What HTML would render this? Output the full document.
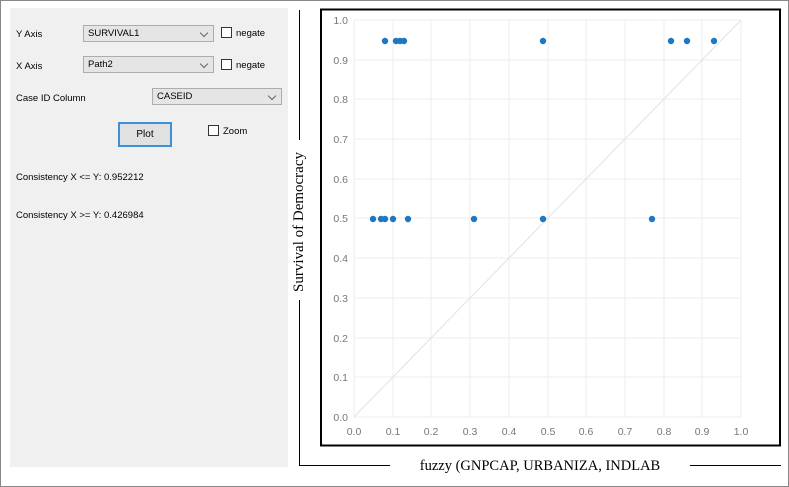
<!DOCTYPE html>
<html><head><style>
body{margin:0;width:789px;height:487px;background:#fff;position:relative;overflow:hidden;font-family:"Liberation Sans",sans-serif}
.frame{position:absolute;left:0;top:0;width:787px;height:485px;border:1px solid #888}
.panel{position:absolute;left:10px;top:8px;width:278px;height:459px;background:#f0f0f0;font-size:9.5px;color:#000}
.lbl{position:absolute}
.cb{position:absolute;width:147px;height:17px;background:#e5e5e5;border:1px solid #adadad;box-sizing:border-box;font-size:9.5px;padding:2px 0 0 4px}
.cb:after{content:"";position:absolute;right:6px;top:4px;width:5px;height:5px;border-right:1px solid #666;border-bottom:1px solid #666;transform:rotate(45deg)}
.chk{position:absolute;width:11px;height:11px;border:1px solid #333;background:#fff;box-sizing:border-box}
.btn{position:absolute;left:108px;top:114px;width:54px;height:25px;border:2px solid #3d8fd6;background:#e1e1e1;box-sizing:border-box;text-align:center;line-height:21px;font-size:10px}
</style></head><body>
<div class="frame"></div>
<div class="panel">
<div class="lbl" style="left:6px;top:21px">Y Axis</div>
<div class="cb" style="left:73px;top:17px;width:131px">SURVIVAL1</div>
<div class="chk" style="left:211px;top:19px"></div><div class="lbl" style="left:226px;top:20px">negate</div>
<div class="lbl" style="left:6px;top:53px">X Axis</div>
<div class="cb" style="left:73px;top:48px;width:131px">Path2</div>
<div class="chk" style="left:211px;top:51px"></div><div class="lbl" style="left:226px;top:52px">negate</div>
<div class="lbl" style="left:6px;top:85px">Case ID Column</div>
<div class="cb" style="left:142px;top:80px;width:130px">CASEID</div>
<div class="btn">Plot</div>
<div class="chk" style="left:198px;top:117px"></div><div class="lbl" style="left:213px;top:118px">Zoom</div>
<div class="lbl" style="left:6px;top:164px">Consistency X &lt;= Y: 0.952212</div>
<div class="lbl" style="left:6px;top:202px">Consistency X &gt;= Y: 0.426984</div>
</div>
<svg style="position:absolute;left:0;top:0" width="789" height="487" font-family="Liberation Sans" >
<line x1="299.5" y1="10" x2="299.5" y2="140" stroke="#000"/>
<line x1="299.5" y1="300" x2="299.5" y2="466" stroke="#000"/>
<line x1="299" y1="465.5" x2="390" y2="465.5" stroke="#000"/>
<line x1="690" y1="465.5" x2="781" y2="465.5" stroke="#000"/>
<text x="540" y="470" text-anchor="middle" font-family="Liberation Serif" font-size="14.5">fuzzy (GNPCAP, URBANIZA, INDLAB</text>
<text transform="translate(303,222) rotate(-90)" text-anchor="middle" font-family="Liberation Serif" font-size="15">Survival of Democracy</text>
<rect x="321" y="9.5" width="459" height="436" fill="#fff" stroke="#000" stroke-width="2"/>
<g stroke="#eee" stroke-width="1">
<line x1="354" y1="20" x2="354" y2="417"/><line x1="393" y1="20" x2="393" y2="417"/><line x1="431" y1="20" x2="431" y2="417"/><line x1="470" y1="20" x2="470" y2="417"/><line x1="509" y1="20" x2="509" y2="417"/><line x1="548" y1="20" x2="548" y2="417"/><line x1="586" y1="20" x2="586" y2="417"/><line x1="625" y1="20" x2="625" y2="417"/><line x1="664" y1="20" x2="664" y2="417"/><line x1="702" y1="20" x2="702" y2="417"/><line x1="741" y1="20" x2="741" y2="417"/>
<line x1="354" y1="20" x2="741" y2="20"/><line x1="354" y1="60" x2="741" y2="60"/><line x1="354" y1="99" x2="741" y2="99"/><line x1="354" y1="139" x2="741" y2="139"/><line x1="354" y1="179" x2="741" y2="179"/><line x1="354" y1="218" x2="741" y2="218"/><line x1="354" y1="258" x2="741" y2="258"/><line x1="354" y1="298" x2="741" y2="298"/><line x1="354" y1="338" x2="741" y2="338"/><line x1="354" y1="377" x2="741" y2="377"/><line x1="354" y1="417" x2="741" y2="417"/>
</g>
<line x1="354" y1="417" x2="741" y2="20" stroke="#e2e2e2"/>
<g font-size="10.5" fill="#777" text-anchor="end">
<text x="348" y="24">1.0</text><text x="348" y="64">0.9</text><text x="348" y="103">0.8</text><text x="348" y="143">0.7</text><text x="348" y="183">0.6</text><text x="348" y="222">0.5</text><text x="348" y="262">0.4</text><text x="348" y="302">0.3</text><text x="348" y="342">0.2</text><text x="348" y="381">0.1</text><text x="348" y="421">0.0</text>
</g>
<g font-size="10.5" fill="#777" text-anchor="middle">
<text x="354" y="435">0.0</text><text x="393" y="435">0.1</text><text x="431" y="435">0.2</text><text x="470" y="435">0.3</text><text x="509" y="435">0.4</text><text x="548" y="435">0.5</text><text x="586" y="435">0.6</text><text x="625" y="435">0.7</text><text x="664" y="435">0.8</text><text x="702" y="435">0.9</text><text x="741" y="435">1.0</text>
</g>
<g fill="#1f77c4">
<circle cx="385" cy="41" r="3.2"/><circle cx="396" cy="41" r="3.2"/><circle cx="400" cy="41" r="3.2"/><circle cx="404" cy="41" r="3.2"/><circle cx="543" cy="41" r="3.2"/><circle cx="671" cy="41" r="3.2"/><circle cx="687" cy="41" r="3.2"/><circle cx="714" cy="41" r="3.2"/>
<circle cx="373" cy="219" r="3.2"/><circle cx="381" cy="219" r="3.2"/><circle cx="385" cy="219" r="3.2"/><circle cx="393" cy="219" r="3.2"/><circle cx="408" cy="219" r="3.2"/><circle cx="474" cy="219" r="3.2"/><circle cx="543" cy="219" r="3.2"/><circle cx="652" cy="219" r="3.2"/>
</g>
</svg>
</body></html>
